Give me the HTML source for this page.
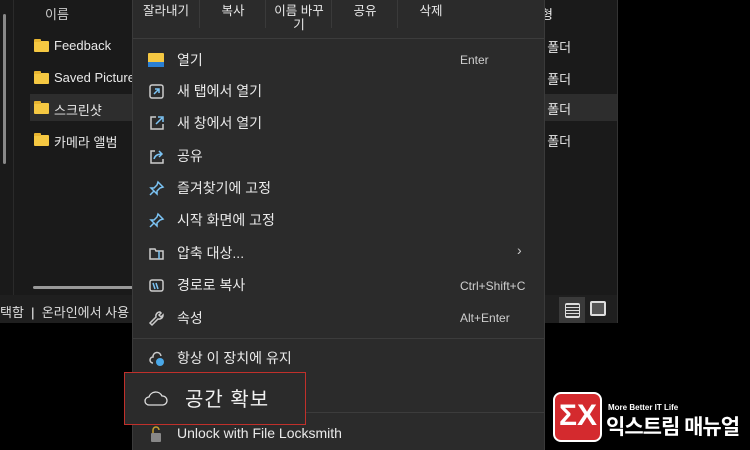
<!DOCTYPE html>
<html><head><meta charset="utf-8"><style>
body{margin:0;width:750px;height:450px;background:#000;position:relative;overflow:hidden;font-family:"Liberation Sans","Noto Sans CJK KR",sans-serif;color:#e8e8e8}
.a{position:absolute;white-space:nowrap}
.win{position:absolute;left:0;top:0;width:617px;height:323px;background:#1a1a1a;border-right:1px solid #333}
.fold{position:absolute;width:15px;height:11px;background:#f5c842;border-radius:1px}
.fold:before{content:"";position:absolute;left:0;top:-2px;width:7px;height:3px;background:#e8b530;border-radius:1px 1px 0 0}
.menu{position:absolute;left:132px;top:0;width:411px;height:450px;background:#2b2b2b;border-left:1px solid #3a3a3a;border-right:1px solid #3a3a3a}
.it{position:absolute;left:44px;font-size:14px;color:#eaeaea}
.sc{position:absolute;left:327px;font-size:12px;color:#cfcfcf}
.ic{position:absolute;left:15px}
.tb{position:absolute;top:4px;font-size:12.5px;text-align:center;width:66px;line-height:14px}
.dv{position:absolute;top:0;width:1px;height:28px;background:#3a3a3a}
</style></head><body>
<div class="win">
 <div class="a" style="left:3px;top:14px;width:3px;height:150px;background:#888;border-radius:2px"></div>
 <div class="a" style="left:13px;top:0;width:1px;height:295px;background:#2a2a2a"></div>
 <div class="a" style="left:45px;top:4px;font-size:13px;color:#ccc">이름</div>
 <div class="a" style="left:30px;top:94px;width:587px;height:27px;background:#2d2d2d"></div>
 <div class="fold" style="left:34px;top:41px"></div><div class="a" style="left:54px;top:38px;font-size:13px">Feedback</div>
 <div class="fold" style="left:34px;top:73px"></div><div class="a" style="left:54px;top:70px;font-size:13px">Saved Pictures</div>
 <div class="fold" style="left:34px;top:103px"></div><div class="a" style="left:54px;top:100px;font-size:13px">스크린샷</div>
 <div class="fold" style="left:34px;top:135px"></div><div class="a" style="left:54px;top:132px;font-size:13px">카메라 앨범</div>
 <div class="a" style="left:540px;top:37px;font-size:13px">! 폴더</div>
 <div class="a" style="left:540px;top:69px;font-size:13px">! 폴더</div>
 <div class="a" style="left:540px;top:99px;font-size:13px">! 폴더</div>
 <div class="a" style="left:540px;top:131px;font-size:13px">! 폴더</div>
 <div class="a" style="left:541px;top:4px;font-size:13px">형</div>
 <div class="a" style="left:33px;top:286px;width:100px;height:3px;background:#999;border-radius:2px"></div>
 <div class="a" style="left:0;top:295px;width:617px;height:28px;background:#1f1f1f"></div>
 <div class="a" style="left:0;top:302px;font-size:13px;color:#ddd">택함 &nbsp;<span style="color:#fff">|</span>&nbsp; 온라인에서 사용</div>
 <div class="a" style="left:559px;top:297px;width:26px;height:26px;background:#3a3a3a"></div>
 <div class="a" style="left:565px;top:303px;width:13px;height:13px;border:1px solid #ddd;border-radius:2px;background:repeating-linear-gradient(#ddd 0 1px,transparent 1px 3px)"></div>
 <div class="a" style="left:590px;top:301px;width:12px;height:11px;border:2px solid #ddd;border-radius:2px;background:#555"></div>
</div>
<div class="menu">
 <div class="tb" style="left:0">잘라내기</div><div class="dv" style="left:66px"></div>
 <div class="tb" style="left:67px">복사</div><div class="dv" style="left:132px"></div>
 <div class="tb" style="left:133px">이름 바꾸<br>기</div><div class="dv" style="left:198px"></div>
 <div class="tb" style="left:199px">공유</div><div class="dv" style="left:264px"></div>
 <div class="tb" style="left:265px">삭제</div>
 <div class="a" style="left:0;top:38px;width:411px;height:1px;background:#3c3c3c"></div>
 <div class="ic" style="top:53px;width:16px;height:14px;background:#f5c842;border-radius:1px"><div style="position:absolute;left:0;bottom:0;width:16px;height:5px;background:#2a7fd4"></div></div>
 <div class="it" style="top:50px">열기</div><div class="sc" style="top:53px">Enter</div>
 <svg class="ic" style="top:83px" width="17" height="17" fill="none" stroke="#ccc" stroke-width="1.5"><rect x="2" y="2" width="13" height="13" rx="2"/><path d="M6 11l5-5M7 6h4v4" stroke="#7cc4f5"/></svg>
 <div class="it" style="top:81px">새 탭에서 열기</div>
 <svg class="ic" style="top:115px" width="17" height="17" fill="none" stroke="#ccc" stroke-width="1.5"><path d="M8 2H3v12h12V9"/><path d="M8 9l6-6M10 2h5v5" stroke="#7cc4f5"/></svg>
 <div class="it" style="top:113px">새 창에서 열기</div>
 <svg class="ic" style="top:148px" width="17" height="17" fill="none" stroke="#ccc" stroke-width="1.5"><path d="M7 3H3v12h12v-4"/><path d="M6 11c1-4 4-5 8-5M11 3l3 3-3 3" stroke="#7cc4f5"/></svg>
 <div class="it" style="top:146px">공유</div>
 <svg class="ic" style="top:180px" width="17" height="17" fill="none" stroke="#7cc4f5" stroke-width="1.5"><path d="M10 2l5 5-3 1-3 3 0 3-6-6 3 0 3-3zM6 11l-4 4"/></svg>
 <div class="it" style="top:178px">즐겨찾기에 고정</div>
 <svg class="ic" style="top:212px" width="17" height="17" fill="none" stroke="#7cc4f5" stroke-width="1.5"><path d="M10 2l5 5-3 1-3 3 0 3-6-6 3 0 3-3zM6 11l-4 4"/></svg>
 <div class="it" style="top:210px">시작 화면에 고정</div>
 <svg class="ic" style="top:245px" width="17" height="17" fill="none" stroke="#ccc" stroke-width="1.5"><path d="M2 4h5l1 2h7v8H2z"/><path d="M11 6v8" stroke="#7cc4f5"/></svg>
 <div class="it" style="top:243px">압축 대상...</div>
 <div class="a" style="left:384px;top:242px;font-size:14px;color:#ccc">›</div>
 <svg class="ic" style="top:277px" width="17" height="17" fill="none" stroke="#ccc" stroke-width="1.5"><rect x="2" y="3" width="13" height="11" rx="2"/><path d="M5 6l2 6M8 6l2 6" stroke="#7cc4f5"/></svg>
 <div class="it" style="top:275px">경로로 복사</div><div class="sc" style="top:279px">Ctrl+Shift+C</div>
 <svg class="ic" style="top:310px" width="17" height="17" fill="none" stroke="#ccc" stroke-width="1.5"><path d="M12 2a4 4 0 0 0-4 5L2 13l2 2 6-6a4 4 0 0 0 5-4l-2 2-2-2 2-2z"/></svg>
 <div class="it" style="top:308px">속성</div><div class="sc" style="top:311px">Alt+Enter</div>
 <div class="a" style="left:0;top:338px;width:411px;height:1px;background:#3c3c3c"></div>
 <svg class="ic" style="top:350px" width="18" height="18" fill="none" stroke="#ccc" stroke-width="1.5"><path d="M5 13a3 3 0 0 1 0-6 4 4 0 0 1 8-1"/><circle cx="12" cy="12" r="4" fill="#4aa8e8" stroke="none"/></svg>
 <div class="it" style="top:348px">항상 이 장치에 유지</div>
 <div class="a" style="left:0;top:412px;width:411px;height:1px;background:#3c3c3c"></div>
 <svg class="ic" style="top:425px" width="16" height="18"><path d="M5 8V5a3 3 0 0 1 6 0" fill="none" stroke="#c9a030" stroke-width="1.5"/><rect x="3" y="8" width="10" height="9" rx="1" fill="#888"/></svg>
 <div class="it" style="top:425px">Unlock with File Locksmith</div>
</div>
<div class="a" style="left:124px;top:372px;width:180px;height:51px;background:#2b2b2b;border:1px solid #c0302b"></div>
<svg class="a" style="left:143px;top:388px" width="27" height="20" fill="none" stroke="#ddd" stroke-width="1.3"><path d="M6 17a4 4 0 0 1 0-8 7 7 0 0 1 13-1 4.5 4.5 0 0 1 1 9z"/></svg>
<div class="a" style="left:185px;top:383px;font-size:20px;color:#f2f2f2;letter-spacing:1px">공간 확보</div>
<div class="a" style="left:553px;top:392px;width:49px;height:50px;background:#d42a2e;border-radius:8px;border:2px solid #fff;box-sizing:border-box"></div>
<div class="a" style="left:559px;top:397px;font-size:30px;font-weight:bold;color:#fff;line-height:38px">ΣX</div>
<div class="a" style="left:608px;top:403px;font-size:8px;font-weight:bold;color:#fff">More Better IT Life</div>
<div class="a" style="left:606px;top:411px;font-size:21px;font-weight:bold;color:#fff;letter-spacing:-1px">익스트림 매뉴얼</div>
</body></html>
